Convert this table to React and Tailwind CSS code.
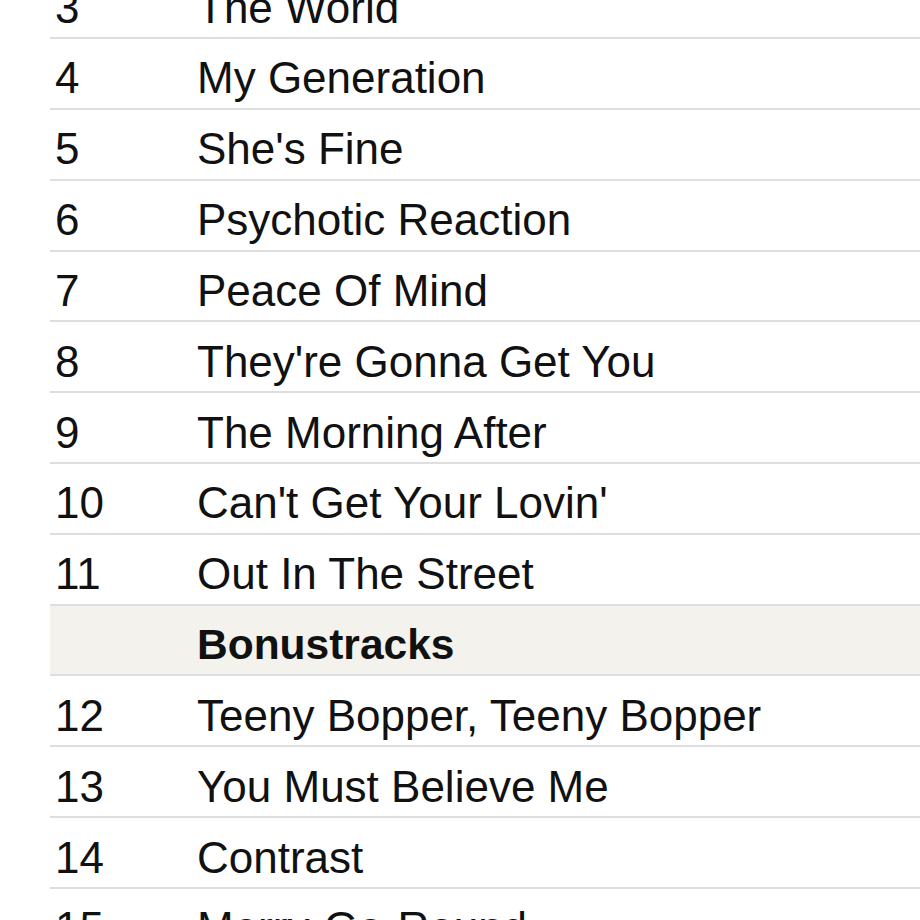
import React from "react";

const rows = [
  { n: "3", t: "The World" },
  { n: "4", t: "My Generation" },
  { n: "5", t: "She's Fine" },
  { n: "6", t: "Psychotic Reaction" },
  { n: "7", t: "Peace Of Mind" },
  { n: "8", t: "They're Gonna Get You" },
  { n: "9", t: "The Morning After" },
  { n: "10", t: "Can't Get Your Lovin'" },
  { n: "11", t: "Out In The Street" },
  { n: "", t: "Bonustracks", head: true },
  { n: "12", t: "Teeny Bopper, Teeny Bopper" },
  { n: "13", t: "You Must Believe Me" },
  { n: "14", t: "Contrast" },
  { n: "15", t: "Merry-Go-Round" },
];

export default function App() {
  return (
    <div className="w-[920px] h-[920px] overflow-hidden bg-white">
      <div
        className="mt-[-31.8px] ml-[50px] flex flex-col text-[#111] text-[44px]"
        style={{ fontFamily: '"Liberation Sans", Arial, sans-serif' }}
      >
        {rows.map((r, i) => (
          <div
            key={i}
            className={`flex items-center h-[70.83px] border-b-2 border-[#dedede] ${
              r.head ? "bg-[#f3f2ec] font-bold text-[42.5px]" : ""
            }`}
          >
            <div className="w-[147px] pl-[5px] pt-[10px] shrink-0">{r.n}</div>
            <div className="whitespace-nowrap pt-[10px]">{r.t}</div>
          </div>
        ))}
      </div>
    </div>
  );
}
